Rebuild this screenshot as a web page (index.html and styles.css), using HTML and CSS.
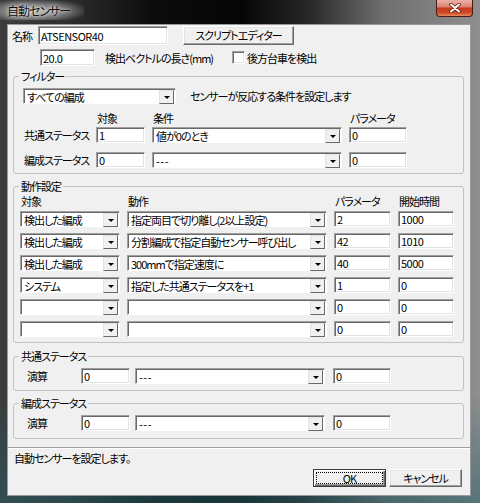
FILE: index.html
```html
<!DOCTYPE html>
<html lang="ja">
<head>
  <meta charset="utf-8">
  <title>自動センサー</title>
  <link rel="stylesheet" href="styles.css">
</head>
<body>
<div class="window">
  <div class="titlebar">
    <span class="title">自動センサー</span>
    <div class="close">
      <svg width="12" height="10" viewBox="0 0 12 10">
        <path d="M2 1.5 L10 8.5 M10 1.5 L2 8.5" stroke="#5a1a10" stroke-width="3.6" stroke-linecap="round"/>
        <path d="M2 1.5 L10 8.5 M10 1.5 L2 8.5" stroke="#fff" stroke-width="2" stroke-linecap="round"/>
      </svg>
    </div>
  </div>

  <div class="client">
    <div class="row row-name">
      <span class="lbl lbl-name">名称</span>
      <input class="edit edit-name" type="text" value="ATSENSOR40">
      <button class="btn btn-script">スクリプトエディター</button>
    </div>
    <div class="row row-len">
      <input class="edit edit-len" type="text" value="20.0">
      <span class="lbl lbl-len">検出ベクトルの長さ(mm)</span>
      <span class="check"></span>
      <span class="lbl lbl-check">後方台車を検出</span>
    </div>

    <fieldset class="group group-filter">
      <legend>フィルター</legend>
      <div class="group-body">
        <div class="row row-filter">
          <div class="combo combo-filter"><span class="combo-text">すべての編成</span><span class="combo-btn"></span></div>
          <span class="lbl filter-note">センサーが反応する条件を設定します</span>
        </div>
        <div class="ftable fhead"><span></span><span>対象</span><span>条件</span><span>パラメータ</span></div>
        <div class="ftable frow">
          <span class="lbl">共通ステータス</span>
          <input class="edit" type="text" value="1">
          <div class="combo"><span class="combo-text">値が0のとき</span><span class="combo-btn"></span></div>
          <input class="edit" type="text" value="0">
        </div>
        <div class="ftable frow frow-2">
          <span class="lbl">編成ステータス</span>
          <input class="edit" type="text" value="0">
          <div class="combo"><span class="combo-text dash">---</span><span class="combo-btn"></span></div>
          <input class="edit" type="text" value="0">
        </div>
      </div>
    </fieldset>

    <fieldset class="group group-action">
      <legend>動作設定</legend>
      <div class="group-body">
        <div class="atable ahead"><span>対象</span><span>動作</span><span>パラメータ</span><span>開始時間</span></div>
        <div class="atable arows">
          <div class="combo"><span class="combo-text">検出した編成</span><span class="combo-btn"></span></div>
          <div class="combo"><span class="combo-text">指定両目で切り離し(2以上設定)</span><span class="combo-btn"></span></div>
          <input class="edit" type="text" value="2">
          <input class="edit" type="text" value="1000">

          <div class="combo"><span class="combo-text">検出した編成</span><span class="combo-btn"></span></div>
          <div class="combo"><span class="combo-text">分割編成で指定自動センサー呼び出し</span><span class="combo-btn"></span></div>
          <input class="edit" type="text" value="42">
          <input class="edit" type="text" value="1010">

          <div class="combo"><span class="combo-text">検出した編成</span><span class="combo-btn"></span></div>
          <div class="combo"><span class="combo-text">300mmで指定速度に</span><span class="combo-btn"></span></div>
          <input class="edit" type="text" value="40">
          <input class="edit" type="text" value="5000">

          <div class="combo"><span class="combo-text">システム</span><span class="combo-btn"></span></div>
          <div class="combo"><span class="combo-text">指定した共通ステータスを+1</span><span class="combo-btn"></span></div>
          <input class="edit" type="text" value="1">
          <input class="edit" type="text" value="0">

          <div class="combo"><span class="combo-text"></span><span class="combo-btn"></span></div>
          <div class="combo"><span class="combo-text"></span><span class="combo-btn"></span></div>
          <input class="edit" type="text" value="0">
          <input class="edit" type="text" value="0">

          <div class="combo"><span class="combo-text"></span><span class="combo-btn"></span></div>
          <div class="combo"><span class="combo-text"></span><span class="combo-btn"></span></div>
          <input class="edit" type="text" value="0">
          <input class="edit" type="text" value="0">
        </div>
      </div>
    </fieldset>

    <fieldset class="group group-calc">
      <legend>共通ステータス</legend>
      <div class="group-body">
        <div class="row calc-row">
          <span class="lbl calc-lbl">演算</span>
          <input class="edit calc-a" type="text" value="0">
          <div class="combo calc-op"><span class="combo-text dash">---</span><span class="combo-btn"></span></div>
          <input class="edit calc-b" type="text" value="0">
        </div>
      </div>
    </fieldset>

    <fieldset class="group group-calc group-calc2">
      <legend>編成ステータス</legend>
      <div class="group-body">
        <div class="row calc-row">
          <span class="lbl calc-lbl">演算</span>
          <input class="edit calc-a" type="text" value="0">
          <div class="combo calc-op"><span class="combo-text dash">---</span><span class="combo-btn"></span></div>
          <input class="edit calc-b" type="text" value="0">
        </div>
      </div>
    </fieldset>

    <div class="separator"></div>
    <div class="status">自動センサーを設定します。</div>
    <div class="row buttons">
      <button class="btn btn-dlg btn-default">OK</button>
      <button class="btn btn-dlg">キャンセル</button>
    </div>
  </div>
</div>
</body>
</html>
```

FILE: styles.css
```css
body {
  margin: 0;
  background: #000;
  font-family: "Noto Sans CJK JP", "Noto Sans", sans-serif;
  font-size: 11px;
  letter-spacing: -1px;
  font-feature-settings: "palt";
  color: #000;
}

/* ウィンドウ枠 */
.window {
  width: 480px;
  height: 503px;
  box-sizing: border-box;
  padding: 0 9px 7px 7px;
  display: flex;
  flex-direction: column;
  background:
    linear-gradient(to bottom, rgba(0, 0, 0, 0) 78%, rgba(40, 95, 105, 0.55) 100%),
    linear-gradient(to right, #3c3c3c 0, #2e2e2e 14%, #0c0c0c 32%, #050505 50%, #262626 64%, #6f6f6f 80%, #8f8f8f 100%);
}

.titlebar {
  height: 24px;
  flex: none;
  display: flex;
  justify-content: space-between;
  align-items: flex-start;
}

.title {
  padding-top: 4px;
  line-height: 14px;
  font-size: 12px;
  color: #111;
  background: radial-gradient(ellipse at 40% 55%, rgba(215, 215, 215, 0.85) 0, rgba(190, 190, 190, 0.35) 55%, rgba(150, 150, 150, 0) 80%);
  margin-left: -7px;
  padding-left: 7px;
  padding-right: 14px;
  height: 20px;
  box-sizing: border-box;
  text-shadow: 0 0 3px #eee, 0 0 6px #ddd;
}

.close {
  width: 37px;
  height: 17px;
  box-sizing: border-box;
  margin-right: -2px;
  border: 1px solid #4c1a12;
  border-top: none;
  border-radius: 0 0 4px 4px;
  background: linear-gradient(to bottom, #eab2a4 0, #de8878 40%, #c8381e 52%, #d24a28 80%, #e58a58 100%);
  display: flex;
  align-items: center;
  justify-content: center;
}

/* クライアント領域 */
.client {
  flex: 1;
  box-sizing: border-box;
  border: 1px solid #9a9a9a;
  background: #f0f0f0;
  padding: 1px 6px 0 5px;
}

.row {
  display: flex;
  align-items: center;
}

.lbl {
  white-space: nowrap;
  line-height: 14px;
}

.edit {
  box-sizing: border-box;
  height: 16px;
  margin: 0;
  padding: 0 2px;
  border: 1px solid;
  border-color: #a0a0a0 #fff #fff #a0a0a0;
  box-shadow: inset 1px 1px 0 #696969, inset -1px -1px 0 #e3e3e3;
  background: #fff;
  font: inherit;
  letter-spacing: -0.5px;
  font-feature-settings: "palt";
  line-height: 14px;
  color: #000;
  outline: none;
  min-width: 0;
}

.check {
  width: 13px;
  height: 13px;
  flex: none;
  box-sizing: border-box;
  border: 1px solid;
  border-color: #a0a0a0 #fff #fff #a0a0a0;
  box-shadow: inset 1px 1px 0 #696969, inset -1px -1px 0 #e3e3e3;
  background: #fff;
}

.combo {
  box-sizing: border-box;
  height: 16px;
  display: flex;
  border: 1px solid;
  border-color: #a0a0a0 #fff #fff #a0a0a0;
  box-shadow: inset 1px 1px 0 #696969;
  background: #fff;
  padding: 1px 1px 0 1px;
  min-width: 0;
}

.combo-text {
  flex: 1;
  min-width: 0;
  white-space: nowrap;
  line-height: 14px;
  padding-left: 2px;
}

.dash {
  letter-spacing: 0.5px;
}

.combo-btn {
  width: 15px;
  height: 14px;
  flex: none;
  box-sizing: border-box;
  border: 1px solid;
  border-color: #e3e3e3 #696969 #696969 #e3e3e3;
  background: #f0f0f0;
  display: flex;
  align-items: center;
  justify-content: center;
}

.combo-btn::after {
  content: "";
  border-top: 3px solid #000;
  border-left: 3px solid transparent;
  border-right: 3px solid transparent;
  margin-top: 1px;
}

.btn {
  box-sizing: border-box;
  height: 19px;
  margin: 0;
  padding: 0;
  border: 1px solid;
  border-color: #fff #696969 #696969 #fff;
  box-shadow: inset -1px -1px 0 #a0a0a0, inset 1px 1px 0 #e3e3e3;
  background: #f0f0f0;
  font: inherit;
  letter-spacing: inherit;
  font-feature-settings: "palt";
  line-height: 15px;
  color: #000;
}

/* 上段 */
.row-name {
  height: 19px;
}
.lbl-name {
  width: 25px;
  margin-left: -1px;
}
.edit-name {
  width: 130px;
  height: 19px;
  margin-left: 1px;
}
.btn-script {
  width: 111px;
  margin-left: 15px;
}

.row-len {
  margin-top: 4px;
  height: 17px;
}
.edit-len {
  width: 55px;
  height: 17px;
  margin-left: 27px;
}
.lbl-len {
  width: 127px;
  margin-left: 10px;
}
.lbl-check {
  margin-left: 2px;
}

/* グループ枠 */
.group {
  margin: 3px 0 0;
  padding: 0;
  border: 1px solid #c2c2c2;
  border-radius: 3px;
  min-width: 0;
}

.group legend {
  margin-left: 5px;
  padding: 0 2px;
  line-height: 14px;
}

.group-filter .group-body {
  padding: 5px 0 5px 9px;
}

.row-filter {
  height: 16px;
}
.combo-filter {
  width: 153px;
}
.filter-note {
  margin-left: 14px;
}

.ftable {
  display: grid;
  grid-template-columns: 66px 49px 190px 58px;
  column-gap: 7px;
  align-items: center;
}
.fhead {
  margin-top: 7px;
  line-height: 14px;
}
.fhead span {
  padding-left: 1px;
}
.frow {
  margin-top: 2px;
  height: 16px;
}
.frow .lbl {
  padding-left: 1px;
}
.frow-2 {
  margin-top: 9px;
}

.group-action {
  margin-top: 5px;
}
.group-action .group-body {
  padding: 1px 0 5px 6px;
}

.atable {
  display: grid;
  grid-template-columns: 100px 200px 57px 56px;
  column-gap: 7px;
}
.ahead {
  line-height: 14px;
}
.ahead span {
  padding-left: 1px;
}
.arows {
  margin-top: 3px;
  row-gap: 6px;
  grid-auto-rows: 16px;
}

.group-calc {
  margin-top: 6px;
}
.group-calc2 {
  margin-top: 5px;
}
.group-calc .group-body {
  padding: 5px 0 6px 13px;
}
.group-calc2 .group-body {
  padding-bottom: 7px;
}
.calc-row {
  height: 16px;
}
.calc-lbl {
  width: 54px;
}
.calc-a {
  width: 49px;
}
.calc-op {
  width: 190px;
  margin-left: 5px;
}
.calc-b {
  width: 58px;
  margin-left: 8px;
}

/* 下段 */
.separator {
  margin: 8px -6px 0 -5px;
  height: 0;
  border-top: 1px solid #a0a0a0;
  border-bottom: 1px solid #fff;
}

.status {
  margin: 2px 0 0 1px;
  line-height: 14px;
}

.buttons {
  margin-top: 4px;
  justify-content: flex-end;
  padding-right: 2px;
}
.btn-dlg {
  width: 73px;
  height: 18px;
  margin-left: 3px;
}
.btn-default {
  border-color: #3c3c3c;
  box-shadow: inset 1px 1px 0 #fff, inset -1px -1px 0 #696969, inset -2px -2px 0 #a0a0a0;
  outline: 1px dotted #000;
  outline-offset: -4px;
}
```
